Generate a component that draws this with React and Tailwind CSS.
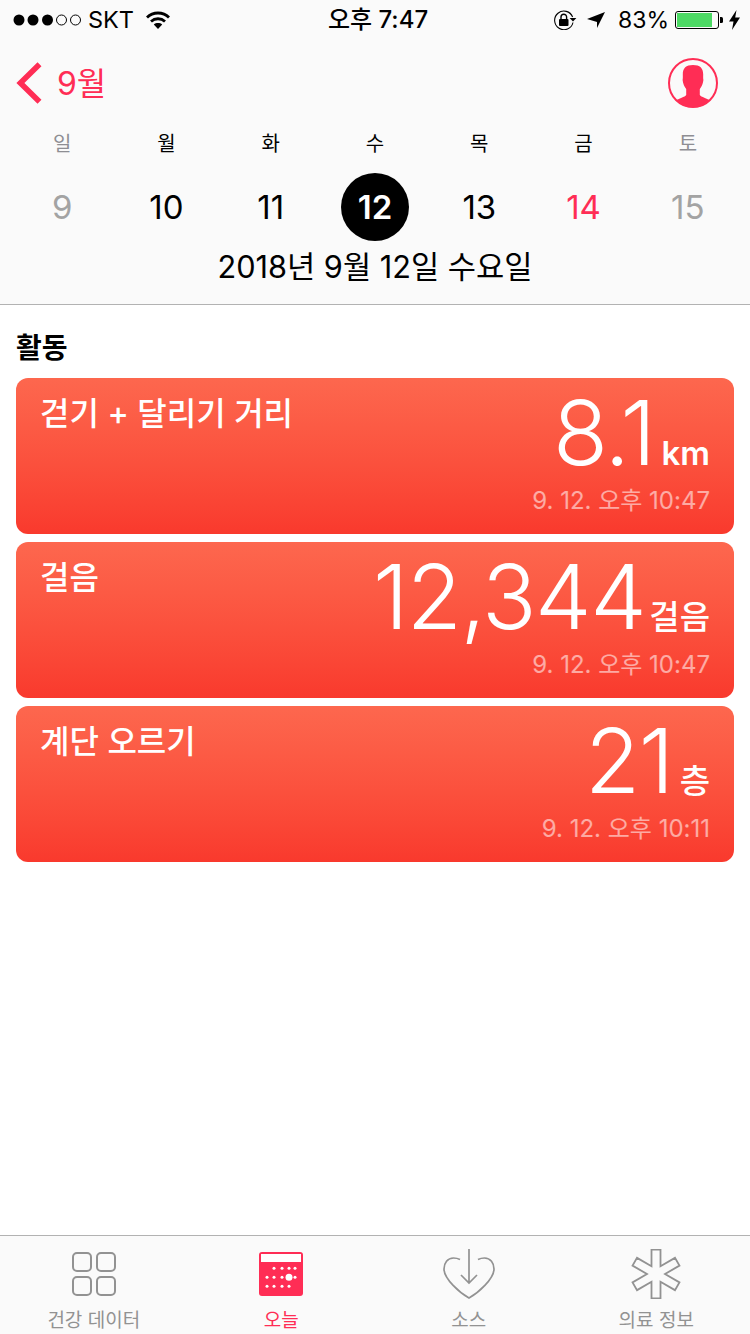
const FONT = "font-['Inter','Noto_Sans_CJK_KR',sans-serif]";

function Dots() {
  return (
    <svg width="70" height="14" viewBox="0 0 70 14" className="shrink-0">
      <circle cx="6" cy="7" r="5.5" fill="#000" />
      <circle cx="20" cy="7" r="5.5" fill="#000" />
      <circle cx="34.5" cy="7" r="5.5" fill="#000" />
      <circle cx="48.5" cy="7" r="5" fill="none" stroke="#000" strokeWidth="1" />
      <circle cx="62.5" cy="7" r="5" fill="none" stroke="#000" strokeWidth="1" />
    </svg>
  );
}

function Wifi() {
  return (
    <svg width="24" height="18" viewBox="0 0 24 18" className="shrink-0">
      <path d="M1 6.5C7 0.5 17 0.5 23 6.5" fill="none" stroke="#000" strokeWidth="2.8" />
      <path d="M5 10.5C9 6.8 15 6.8 19 10.5" fill="none" stroke="#000" strokeWidth="2.8" />
      <path d="M12 18L7.8 13.4C10 11.6 14 11.6 16.2 13.4Z" fill="#000" />
    </svg>
  );
}

function RotLock() {
  return (
    <svg width="24" height="20" viewBox="0 0 24 20" className="shrink-0">
      <path d="M20 12.5A9.3 9.3 0 1 1 19.6 7" fill="none" stroke="#000" strokeWidth="1.1" />
      <path d="M16.6 8H23.4L20 11.6Z" fill="#000" />
      <rect x="6" y="9" width="9.5" height="7" rx="1" fill="#000" />
      <path d="M8 9.5V7a2.8 2.8 0 0 1 5.6 0V9.5" fill="none" stroke="#000" strokeWidth="1.4" />
    </svg>
  );
}

function Location() {
  return (
    <svg width="18" height="16" viewBox="0 0 18 16" className="shrink-0">
      <path d="M18 0L0 7L10 10L10 16Z" fill="#000" />
    </svg>
  );
}

function Battery() {
  return (
    <svg width="48" height="18" viewBox="0 0 48 18" className="shrink-0">
      <rect x="0.5" y="0.5" width="43" height="17" rx="2.5" fill="none" stroke="#000" strokeWidth="1" />
      <rect x="2" y="2" width="35" height="14" fill="#4cd964" />
      <path d="M45 6h1.5a1.5 1.5 0 0 1 1.5 1.5v3a1.5 1.5 0 0 1-1.5 1.5H45Z" fill="#000" />
    </svg>
  );
}

function Bolt() {
  return (
    <svg width="11" height="20" viewBox="0 0 11 20" className="shrink-0">
      <path d="M7.5 0L0 11.5H4.5L3 20L11 7.5H6.2Z" fill="#000" />
    </svg>
  );
}

function Chevron() {
  return (
    <svg width="26" height="42" viewBox="0 0 26 42" className="shrink-0">
      <path d="M23.5 2.2L4.4 21L23.5 39.8" fill="none" stroke="#ff2d55" strokeWidth="5.6" />
    </svg>
  );
}

function Avatar() {
  return (
    <svg width="50" height="50" viewBox="0 0 50 50" className="shrink-0">
      <defs>
        <clipPath id="avatar-clip">
          <circle cx="25" cy="25" r="24.5" />
        </clipPath>
      </defs>
      <circle cx="25" cy="25" r="24" fill="none" stroke="#ff2d55" strokeWidth="2" />
      <path
        clipPath="url(#avatar-clip)"
        d="M25 7C32 7 35.2 10 35.2 16.5C35.2 18 35 20 35.4 22C35 26 33.5 29 31.8 31L31.8 37C33 39 39 40.5 43 43L50 50H0L7 43C11 40.5 17 39 18.2 37L18.2 31C16.5 29 15 26 14.6 22C15 20 14.8 18 14.8 16.5C14.8 10 18 7 25 7Z"
        fill="#ff2d55"
      />
    </svg>
  );
}

function GridIcon() {
  return (
    <svg width="44" height="44" viewBox="0 0 44 44" className="shrink-0">
      <g fill="none" stroke="#929292" strokeWidth="2">
        <rect x="1" y="1" width="18" height="18" rx="4" />
        <rect x="25" y="1" width="18" height="18" rx="4" />
        <rect x="1" y="25" width="18" height="18" rx="4" />
        <rect x="25" y="25" width="18" height="18" rx="4" />
      </g>
    </svg>
  );
}

function CalendarIcon() {
  const r1 = [15, 23, 30, 36];
  const r2 = [8, 15, 23, 36];
  const r3 = [8, 15, 23, 30];
  return (
    <svg width="44" height="44" viewBox="0 0 44 44" className="shrink-0">
      <rect width="44" height="44" rx="3" fill="#ff2d55" />
      <rect x="2" y="2" width="40" height="8" fill="#fff" />
      {r1.map((x) => <circle key={x} cx={x} cy="16.3" r="1.5" fill="#fff" />)}
      {r2.map((x) => <circle key={x} cx={x} cy="25.3" r="1.5" fill="#fff" />)}
      <circle cx="30" cy="25.3" r="3.5" fill="#fff" />
      {r3.map((x) => <circle key={x} cx={x} cy="34.3" r="1.5" fill="#fff" />)}
    </svg>
  );
}

function HeartIcon() {
  return (
    <svg width="52" height="50" viewBox="0 0 52 50" className="shrink-0">
      <g fill="none" stroke="#929292" strokeWidth="1.7">
        <path d="M26 0V34M18 26L26 34L34 26" />
        <path d="M17 10.5C15 9.5 12.5 9 10.5 9C4.5 9 1 14 1 20C1 30 17 44 26 49C35 44 51 30 51 20C51 14 47.5 9 41.5 9C39.5 9 37 9.5 35 10.5" />
      </g>
    </svg>
  );
}

function StarIcon() {
  return (
    <svg width="50" height="50" viewBox="-25 -25 50 50" className="shrink-0">
      <polygon
        points="-4.5,-24.5 4.5,-24.5 4.5,-7.79 18.97,-16.15 23.47,-8.35 9,0 23.47,8.35 18.97,16.15 4.5,7.79 4.5,24.5 -4.5,24.5 -4.5,7.79 -18.97,16.15 -23.47,8.35 -9,0 -23.47,-8.35 -18.97,-16.15 -4.5,-7.79"
        fill="none"
        stroke="#929292"
        strokeWidth="1.8"
      />
    </svg>
  );
}

const WEEK = [
  { w: "일", d: "9", wc: "text-[#8e8e93]", dc: "text-[#a3a3a3]" },
  { w: "월", d: "10", wc: "text-black", dc: "text-black" },
  { w: "화", d: "11", wc: "text-black", dc: "text-black" },
  { w: "수", d: "12", wc: "text-black", dc: "text-white font-semibold", active: true },
  { w: "목", d: "13", wc: "text-black", dc: "text-black" },
  { w: "금", d: "14", wc: "text-black", dc: "text-[#ff2d55]" },
  { w: "토", d: "15", wc: "text-[#8e8e93]", dc: "text-[#a3a3a3]" },
];

const CARDS = [
  { title: "걷기 + 달리기 거리", value: "8.1", unit: "km", unitClass: "font-semibold", time: "9. 12. 오후 10:47" },
  { title: "걸음", value: "12,344", unit: "걸음", unitClass: "font-medium -ml-[3px]", time: "9. 12. 오후 10:47" },
  { title: "계단 오르기", value: "21", unit: "층", unitClass: "font-medium", time: "9. 12. 오후 10:11" },
];

function Card({ title, value, unit, unitClass, time }) {
  return (
    <div className="h-[156px] rounded-[12px] bg-gradient-to-b from-[#fd674e] to-[#f9392d] flex justify-between pl-6 pr-[24px] text-white">
      <div className="pt-[16px] text-[32px] leading-[40px] font-medium">{title}</div>
      <div className="flex flex-col items-end">
        <div className="flex items-baseline h-[108px] pt-[1px] gap-[7px]">
          <span className="text-[90px] leading-[108px] font-light tracking-[-1.5px]">{value}</span>
          <span className={`text-[33px] leading-[40px] ${unitClass}`}>{unit}</span>
        </div>
        <div className="text-[24px] leading-[30px] text-white/55">{time}</div>
      </div>
    </div>
  );
}

function Tab({ icon, label, active }) {
  return (
    <div className="flex flex-col items-center">
      <div className="h-[72px] pt-[4px] flex items-center justify-center">{icon}</div>
      <div className={`text-[19px] leading-[24px] pt-[1px] ${active ? "text-[#ff2d55]" : "text-[#929292]"}`}>{label}</div>
    </div>
  );
}

export default function App() {
  return (
    <div className={`${FONT} w-[750px] h-[1334px] bg-white flex flex-col overflow-hidden text-black`}>
      <div className="h-[305px] shrink-0 bg-[#fafafa] border-b border-[#b2b2b2] flex flex-col">
        <div className="h-10 pl-[13px] pr-[10px] flex items-center text-[24px] leading-[30px]">
          <div className="flex-1 flex items-center">
            <Dots />
            <span className="ml-[5px] text-[23.5px]">SKT</span>
            <span className="ml-[12px]"><Wifi /></span>
          </div>
          <div className="font-medium pl-[3px]">오후 7:47</div>
          <div className="flex-1 flex items-center justify-end">
            <RotLock />
            <span className="ml-[10px]"><Location /></span>
            <span className="ml-[13px] text-[23px]">83%</span>
            <span className="ml-[6px]"><Battery /></span>
            <span className="ml-[6px]"><Bolt /></span>
          </div>
        </div>
        <div className="h-[86px] pl-[16px] pr-[32px] flex items-center justify-between">
          <div className="flex items-center text-[#ff2d55] text-[32px] leading-[40px]">
            <Chevron />
            <span className="ml-[15px] pt-[2px]">9월</span>
          </div>
          <Avatar />
        </div>
        <div className="px-[10px] grid grid-cols-7">
          {WEEK.map((c) => (
            <div key={c.w} className="flex flex-col items-center">
              <div className={`h-[34px] text-[20px] leading-[36px] ${c.wc}`}>{c.w}</div>
              <div className="h-[68px] mt-[13px] flex items-center justify-center">
                <div className={`w-[68px] h-[68px] rounded-full flex items-center justify-center text-[33px] leading-[40px] ${c.active ? "bg-black" : ""} ${c.dc}`}>
                  {c.d}
                </div>
              </div>
            </div>
          ))}
        </div>
        <div className="text-center text-[30.7px] leading-[40px] mt-[6px]">2018년 9월 12일 수요일</div>
      </div>
      <div className="flex-1 px-4">
        <div className="h-[73px] pt-[23px] text-[28px] leading-[40px] font-semibold">활동</div>
        <div className="flex flex-col gap-2">
          {CARDS.map((c) => <Card key={c.title} {...c} />)}
        </div>
      </div>
      <div className="h-[99px] shrink-0 bg-[#fafafa] border-t border-[#b2b2b2] grid grid-cols-4">
        <Tab icon={<GridIcon />} label="건강 데이터" />
        <Tab icon={<CalendarIcon />} label="오늘" active />
        <Tab icon={<HeartIcon />} label="소스" />
        <Tab icon={<StarIcon />} label="의료 정보" />
      </div>
    </div>
  );
}
